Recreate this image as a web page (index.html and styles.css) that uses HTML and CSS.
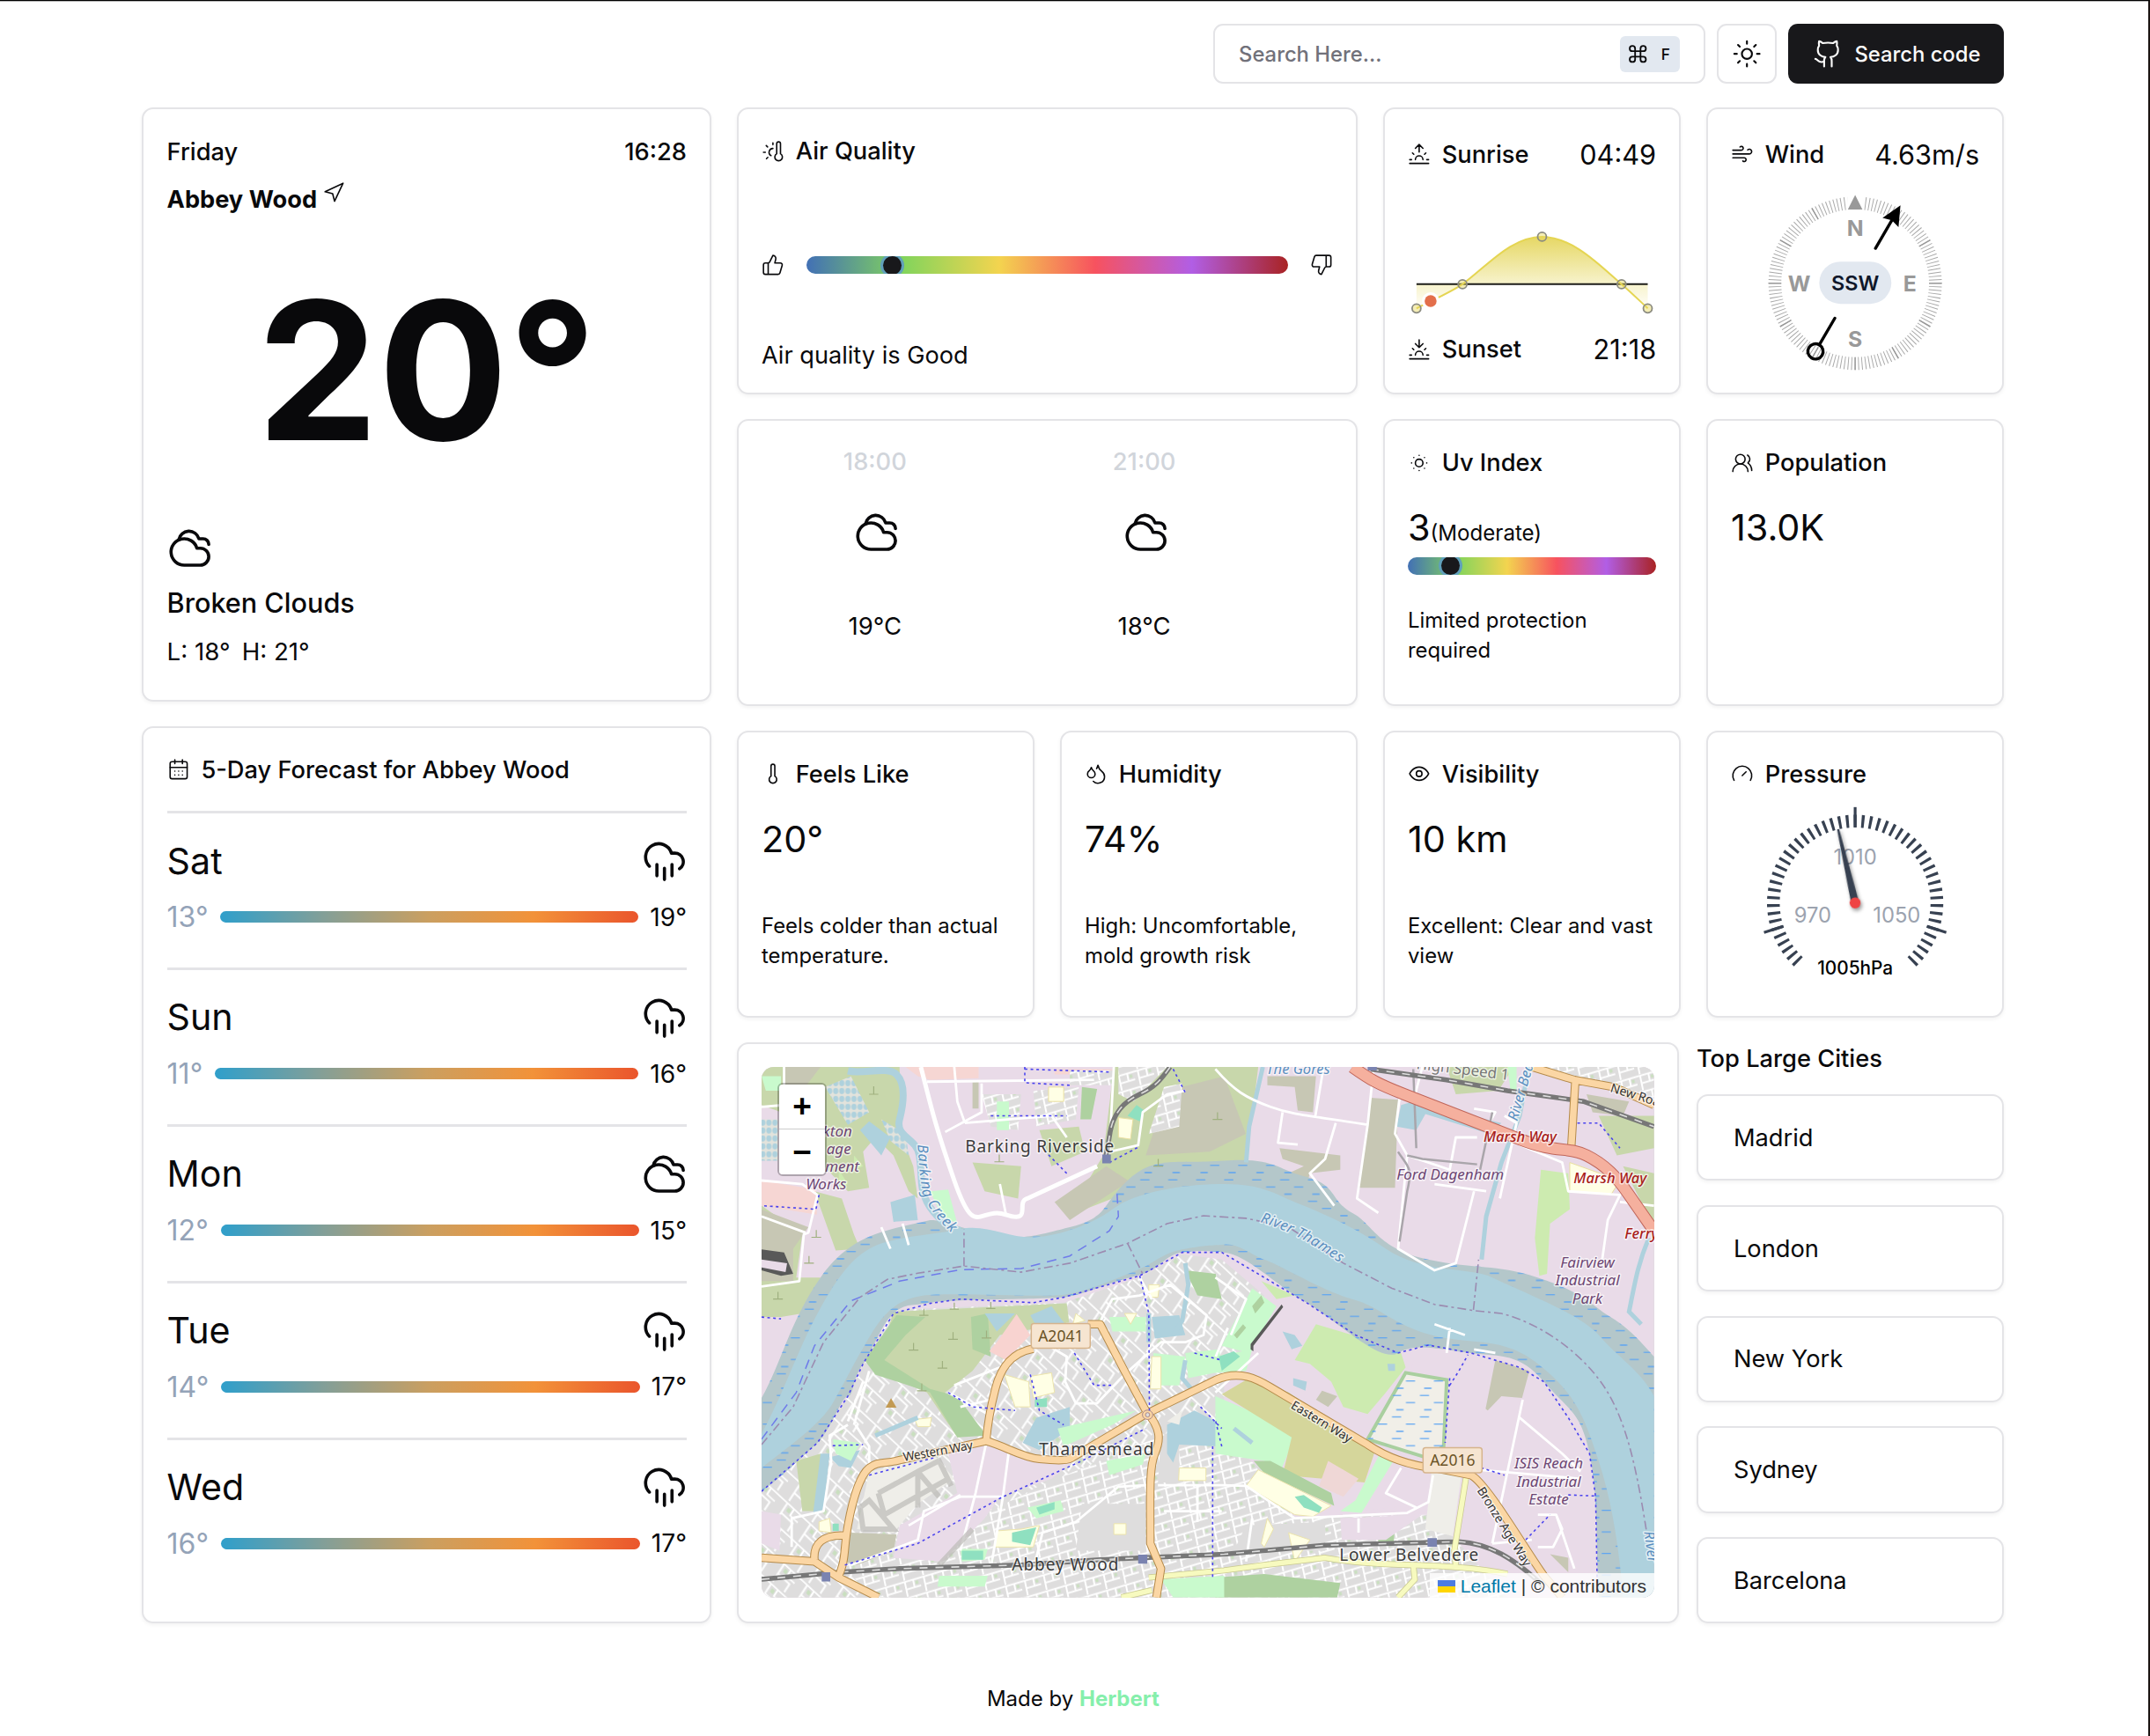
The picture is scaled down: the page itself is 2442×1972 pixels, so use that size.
FILE: index.html
```html
<!DOCTYPE html>
<html lang="en">
<head>
<meta charset="utf-8">
<title>Weather</title>
<link rel="stylesheet" href="styles.css">
</head>
<body>
<svg class="defs" aria-hidden="true">
  <symbol id="cloudy" viewBox="0 0 24 24"><path d="M17.5 21H9a7 7 0 1 1 6.71-9h1.79a4.5 4.5 0 1 1 0 9Z"/><path d="M22 10a3 3 0 0 0-3-3h-2.207a5.502 5.502 0 0 0-10.702.5"/></symbol>
  <symbol id="rain" viewBox="0 0 24 24"><path d="M4 14.899A7 7 0 1 1 15.71 8h1.79a4.5 4.5 0 0 1 2.5 8.242M16 14v6M8 14v6M12 16v6"/></symbol>
</svg>
<div class="page">
  <header class="header">
    <div class="search"><span>Search Here...</span>
      <kbd class="kbd"><svg class="cmd" viewBox="0 0 24 24"><path d="M15 6v12a3 3 0 1 0 3-3H6a3 3 0 1 0 3 3V6a3 3 0 1 0-3 3h12a3 3 0 1 0-3-3"/></svg><span>F</span></kbd>
    </div>
    <button class="theme"><svg class="i-head" viewBox="0 0 24 24"><circle cx="12" cy="12" r="4"/><path d="M12 2v2M12 20v2M4.93 4.93l1.41 1.41M17.66 17.66l1.41 1.41M2 12h2M20 12h2M6.34 17.66l-1.41 1.41M19.07 4.93l-1.41 1.41"/></svg></button>
    <button class="code"><svg class="i-head" viewBox="0 0 24 24"><path d="M15 22v-4a4.8 4.8 0 0 0-1-3.5c3 0 6-2 6-5.5.08-1.25-.27-2.48-1-3.5.28-1.15.28-2.35 0-3.5 0 0-1 0-3 1.5-2.64-.5-5.36-.5-8 0C6 2 5 2 5 2c-.3 1.15-.3 2.35 0 3.5A5.403 5.403 0 0 0 4 9c0 3.5 3 5.5 6 5.5-.39.49-.68 1.05-.85 1.65-.17.6-.22 1.23-.15 1.85v4"/><path d="M9 18c-4.51 2-5-2-7-2"/></svg>Search code</button>
  </header>

  <main class="main">
    <div class="left">
      <section class="card current">
        <div class="row between medium"><span>Friday</span><span>16:28</span></div>
        <div class="place">Abbey Wood<svg class="icon" viewBox="0 0 24 24"><path d="M3 11 22 2 13 21 11 13 3 11Z"/></svg></div>
        <div class="temp">20°</div>
        <svg class="wicon"><use href="#cloudy"/></svg>
        <div class="cond">Broken Clouds</div>
        <div class="lohi"><span>L: 18°</span><span>H: 21°</span></div>
      </section>
      <section class="card forecast">
        <h2 class="title"><svg class="icon" viewBox="0 0 24 24"><rect x="3" y="4" width="18" height="18" rx="2"/><path d="M16 2v4M8 2v4M3 10h18M8 14h.01M12 14h.01M16 14h.01M8 18h.01M12 18h.01M16 18h.01"/></svg>5-Day Forecast for Abbey Wood</h2>
        <div class="days">
          <div class="day"><div class="dhead"><span>Sat</span><svg class="wicon"><use href="#rain"/></svg></div><div class="range"><span class="lo">13°</span><i></i><span class="hi">19°</span></div></div>
          <div class="day"><div class="dhead"><span>Sun</span><svg class="wicon"><use href="#rain"/></svg></div><div class="range"><span class="lo">11°</span><i></i><span class="hi">16°</span></div></div>
          <div class="day"><div class="dhead"><span>Mon</span><svg class="wicon"><use href="#cloudy"/></svg></div><div class="range"><span class="lo">12°</span><i></i><span class="hi">15°</span></div></div>
          <div class="day"><div class="dhead"><span>Tue</span><svg class="wicon"><use href="#rain"/></svg></div><div class="range"><span class="lo">14°</span><i></i><span class="hi">17°</span></div></div>
          <div class="day"><div class="dhead"><span>Wed</span><svg class="wicon"><use href="#rain"/></svg></div><div class="range"><span class="lo">16°</span><i></i><span class="hi">17°</span></div></div>
        </div>
      </section>
    </div>

    <div class="right">
      <section class="card wide">
        <h2 class="title first"><svg class="icon" viewBox="0 0 24 24"><path d="M12 9a4 4 0 0 0-2 7.5M12 3v2M6.6 18.4l-1.4 1.4M20 4v10.54a4 4 0 1 1-4 0V4a2 2 0 0 1 4 0ZM4 13H2M6.34 7.34 4.93 5.93"/></svg>Air Quality</h2>
        <div class="aqrow">
          <svg class="icon" viewBox="0 0 24 24"><path d="M7 10v12M15 5.88 14 10h5.83a2 2 0 0 1 1.92 2.56l-2.33 8A2 2 0 0 1 17.5 22H4a2 2 0 0 1-2-2v-8a2 2 0 0 1 2-2h2.76a2 2 0 0 0 1.79-1.11L12 2a3.13 3.13 0 0 1 3 3.88Z"/></svg>
          <div class="scale"><b style="left:17.85%"></b></div>
          <svg class="icon" viewBox="0 0 24 24"><path d="M17 14V2M9 18.12 10 14H4.17a2 2 0 0 1-1.92-2.56l2.33-8A2 2 0 0 1 6.5 2H20a2 2 0 0 1 2 2v8a2 2 0 0 1-2 2h-2.76a2 2 0 0 0-1.79 1.11L12 22a3.13 3.13 0 0 1-3-3.88Z"/></svg>
        </div>
        <p class="aqtext">Air quality is Good</p>
      </section>

      <section class="card">
        <div class="sunrow"><h2 class="title"><svg class="icon" viewBox="0 0 24 24"><path d="M12 2v8M4.93 10.93l1.41 1.41M2 18h2M20 18h2M19.07 10.93l-1.41 1.41M22 22H2M8 6l4-4 4 4M16 18a4 4 0 0 0-8 0"/></svg>Sunrise</h2><span class="lg">04:49</span></div>
        <svg class="sunchart" viewBox="0 0 283 172.5">
          <defs>
            <linearGradient id="up" x1="0" y1="68" x2="0" y2="122" gradientUnits="userSpaceOnUse"><stop offset="0" stop-color="#e6d764"/><stop offset="1" stop-color="#f7f3cc"/></linearGradient>
            <linearGradient id="down" x1="0" y1="122" x2="0" y2="150" gradientUnits="userSpaceOnUse"><stop offset="0" stop-color="#f7f3cc"/><stop offset="1" stop-color="#fffefa"/></linearGradient>
          </defs>
          <g transform="translate(0 .7)">
          <path fill="url(#up)" d="M62.3 122.3C92 100 118 68.2 152.9 68.2S219 101 243.5 122.3Z"/>
          <path fill="url(#down)" d="M9.9 122.3H62.3C46 133 27.4 140.7 9.9 149.8ZM243.5 122.3H273.3V149.8C264 141 254 131 243.5 122.3Z"/>
          <path class="axis" d="M9.9 122.2H273.3"/>
          <path class="curve" d="M9.9 149.8C27.4 140.7 46 133 62.3 122.3C92 100 118 68.2 152.9 68.2S219 101 243.5 122.3C254 131 264 141 273.3 149.8"/>
          <g class="pts"><circle cx="9.9" cy="149.8" r="5"/><circle cx="62.3" cy="122.3" r="5"/><circle cx="152.9" cy="68.2" r="5"/><circle cx="243.5" cy="122.3" r="5"/><circle cx="273.3" cy="149.8" r="5"/></g>
          <circle cx="26" cy="141.5" r="10" fill="#fff"/><circle cx="26" cy="141.5" r="6.8" fill="#e36f4b"/>
          </g>
        </svg>
        <div class="sunrow"><h2 class="title"><svg class="icon" viewBox="0 0 24 24"><path d="M12 10V2M4.93 10.93l1.41 1.41M2 18h2M20 18h2M19.07 10.93l-1.41 1.41M22 22H2M16 6l-4 4-4-4M16 18a4 4 0 0 0-8 0"/></svg>Sunset</h2><span class="lg">21:18</span></div>
      </section>

      <section class="card">
        <div class="sunrow"><h2 class="title"><svg class="icon" viewBox="0 0 24 24"><path d="M17.7 7.7a2.5 2.5 0 1 1 1.8 4.3H2M9.6 4.6A2 2 0 1 1 11 8H2M12.6 19.4A2 2 0 1 0 14 16H2"/></svg>Wind</h2><span class="lg">4.63m/s</span></div>
        <svg class="compass" viewBox="-141.3 -121.8 282.6 221">
          <circle class="ticks" r="91.3" pathLength="1440"/>
          <circle class="ticks twelfths" r="91.3" pathLength="1440"/>
          <path fill="#fff" d="M-9-101H9V-83H-9Z"/><path fill="#999" d="M0-100.5 8.3-84H-8.3Z"/>
          <g class="dirs"><text y="-54">N</text><text x="-63.7" y="8.8">W</text><text x="62.3" y="8.8">E</text><text y="72">S</text></g>
          <rect x="-40.8" y="-24.6" width="82" height="48" rx="24" fill="#e2e8f0"/>
          <text class="ssw" y="8">SSW</text>
          <g transform="rotate(30.2)"><path class="needle" d="M0-46V-84M0 46V81"/><path d="M0-102.5 10.5-80 0-83-10.5-80Z"/><circle class="needle" r="8.7" cy="89.7"/></g>
        </svg>
      </section>

      <section class="card wide hours">
        <div class="hour"><time>18:00</time><svg class="wicon"><use href="#cloudy"/></svg><span>19°C</span></div>
        <div class="hour"><time>21:00</time><svg class="wicon"><use href="#cloudy"/></svg><span>18°C</span></div>
      </section>

      <section class="card">
        <h2 class="title"><svg class="icon" viewBox="0 0 24 24"><circle cx="12" cy="12" r="4"/><path d="M12 4h.01M20 12h.01M12 20h.01M4 12h.01M17.657 6.343h.01M17.657 17.657h.01M6.343 17.657h.01M6.343 6.343h.01"/></svg>Uv Index</h2>
        <div class="value">3<small>(Moderate)</small></div>
        <div class="scale uv"><b style="left:17.3%"></b></div>
        <p class="desc uvdesc">Limited protection required</p>
      </section>
      <section class="card">
        <h2 class="title"><svg class="icon" viewBox="0 0 24 24"><path d="M18 21a8 8 0 0 0-16 0"/><circle cx="10" cy="8" r="5"/><path d="M22 20c0-3.37-2-6.5-4-8a5 5 0 0 0-.45-8.3"/></svg>Population</h2>
        <div class="value">13.0K</div>
      </section>

      <section class="card">
        <h2 class="title"><svg class="icon" viewBox="0 0 24 24"><path d="M14 4v10.54a4 4 0 1 1-4 0V4a2 2 0 0 1 4 0Z"/></svg>Feels Like</h2>
        <div class="value">20°</div><p class="desc">Feels colder than actual temperature.</p>
      </section>
      <section class="card">
        <h2 class="title"><svg class="icon" viewBox="0 0 24 24"><path d="M7 16.3c2.2 0 4-1.83 4-4.05 0-1.16-.57-2.26-1.71-3.19S7.29 6.75 7 5.3c-.29 1.45-1.14 2.84-2.29 3.76S3 11.1 3 12.25c0 2.22 1.8 4.05 4 4.05z"/><path d="M12.56 6.6A10.97 10.97 0 0 0 14 3.02c.5 2.5 2 4.9 4 6.5s3 3.5 3 5.5a6.98 6.98 0 0 1-11.91 4.97"/></svg>Humidity</h2>
        <div class="value">74%</div><p class="desc">High: Uncomfortable, mold growth risk</p>
      </section>
      <section class="card">
        <h2 class="title"><svg class="icon" viewBox="0 0 24 24"><path d="M2 12s3-7 10-7 10 7 10 7-3 7-10 7-10-7-10-7Z"/><circle cx="12" cy="12" r="3"/></svg>Visibility</h2>
        <div class="value">10 km</div><p class="desc">Excellent: Clear and vast view</p>
      </section>
      <section class="card">
        <h2 class="title"><svg class="icon" viewBox="0 0 24 24"><path d="M12 14l4-4M3.34 19a10 10 0 1 1 17.32 0"/></svg>Pressure</h2>
        <svg class="gauge" viewBox="-141.3 -125.7 282.6 225">
          <path class="gticks" pathLength="272" d="M-64.6 66.9A93 93 0 1 1 64.6 66.9"/>
          <g class="gmajor"><path d="M0-86V-109"/><path d="M0-86V-109" transform="rotate(108)"/><path d="M0-86V-109" transform="rotate(-108)"/></g>
          <g class="glabels"><text y="-43.3">1010</text><text x="-48.3" y="22.6">970</text><text x="47.3" y="22.6">1050</text></g>
          <g class="gneedle" transform="rotate(-13)"><path d="M-1.2-86H1.2L4.5 0H-4.5Z"/><circle r="6.2"/></g>
          <text class="hpa" y="81.3">1005hPa</text>
        </svg>
      </section>

      <div class="bottom">
        <section class="card mapcard">
          <div class="map">
            <svg class="geo" viewBox="46 54 2936 1476" preserveAspectRatio="none">
              <defs>
                <pattern id="st1" width="64" height="46" patternUnits="userSpaceOnUse" patternTransform="rotate(-14)"><rect width="64" height="46" fill="#dedddd"/><path class="street" d="M0 4H64M14 4V46M14 26H64M42 4V26"/><rect x="48" y="10" width="9" height="9" fill="#c9dfbf"/></pattern>
                <pattern id="st2" width="96" height="70" patternUnits="userSpaceOnUse" patternTransform="rotate(38)"><rect width="96" height="70" fill="#dedddd"/><path class="street" d="M0 8H96M20 8V70M20 42H68V70M48 8V30H80"/><rect x="30" y="16" width="12" height="12" fill="#c9dfbf"/></pattern>
                <pattern id="mud" width="92" height="60" patternUnits="userSpaceOnUse"><path class="dash" d="M4 8H34M50 28H80M18 48H42"/></pattern>
                <pattern id="beds" width="20" height="22" patternUnits="userSpaceOnUse"><rect width="20" height="22" fill="#e3e3dc"/><circle cx="10" cy="11" r="8.5" fill="#aed1dd"/></pattern>
              </defs>
              <rect x="46" y="54" width="2936" height="1476" fill="#e9dbe8"/>
              <g class="scrub"><path d="M120 54H500L505 240 545 330 560 420 530 400 480 300 420 250 380 290 400 390 330 400 240 320 240 220 46 160V54ZM220 400 290 565 370 560 350 520 310 420ZM46 440 180 520 160 640 240 640 180 740 110 750H46ZM1205 54H1680L1640 330 1400 330 1200 420 1050 470 1170 300ZM2300 54H2520L2470 120 2330 130ZM2800 190H2982V280L2860 300ZM2880 330 2982 350V500Z"/><path d="M740 320 900 330 890 420 780 400ZM960 230 1090 220 1110 290 1000 330Z"/></g>
              <path class="wood" d="M1100 110 1150 115 1130 200 1095 200Z"/>
              <g class="brown"><path d="M1380 120 1568 80 1639 240 1520 290 1310 300ZM1010 430 1180 330 1255 372 1060 480ZM46 450 200 500 150 560 150 650 46 650ZM1710 80H1870L1860 180 1810 175 1800 110 1710 105ZM1750 280 1950 300V340L1850 350 1840 380 1780 350 1830 330 1760 310ZM2050 140 2140 145 2130 390 2010 390ZM740 95H760V170H740ZM2760 130 2900 150 2880 190 2780 180ZM120 54H240L180 120 120 130Z"/></g>
              <path fill="#f6d6d3" d="M46 370 225 395 228 465 46 440ZM520 54H760V85L600 90 560 80ZM1010 60H1200V75H1010Z"/>
              <path fill="url(#beds)" d="M255 110 340 80 400 180 330 215ZM46 200H100V315H46ZM440 200 520 240 530 300 470 260Z"/>
              <path class="water" d="M370 230 400 205 470 250 440 300ZM470 430 550 410 560 480 480 485ZM2135 220 2150 160 2190 150 2480 210 2440 240 2230 185 2200 230Z"/>
              <path fill="url(#st1)" d="M770 130H900L890 230 800 220ZM940 120 1090 110 1080 200 950 220ZM1220 54H1380L1270 150 1220 130ZM1370 110 1430 100 1420 220 1320 240ZM1060 64H1205V105H1060ZM2600 54H2982V140L2850 105Z"/>
              <g class="park"><path d="M820 150H860V230H820ZM600 400 660 395 690 490 640 470ZM46 80H110V120H60ZM2500 54H2530V120H2510Z"/></g>
              <path fill="#cdebb0" d="M2610 340 2700 350 2705 450 2640 490 2630 630 2605 635 2590 530ZM300 340 330 380 300 395ZM350 300 380 330 350 340Z"/>
              <path fill="#ffffe5" stroke="#e9dfa0" d="M990 110H1040V150H990ZM1220 195 1268 200 1260 255 1220 250ZM2705 320 2870 370 2840 410 2705 400Z"/>
              <path class="pitch" d="M1250 190 1280 160 1305 175 1290 205Z"/>

              <path fill="url(#st2)" d="M46 1235 230 1100 330 970 390 870 480 730 1040 710 1290 640 1430 575 1560 590 1700 690 1650 850 1568 920V1530H46Z"/>
              <path fill="url(#st1)" d="M1330 1090H1568L1700 1180 1800 1310 2250 1300 2330 1370 2500 1530H400L320 1440 560 1390 800 1290 960 1220Z"/>
              <path fill="#dedddd" d="M1100 1270H1310V1400H1080ZM1360 1085 1420 1050V1210H1350ZM1640 1330 1900 1320V1400H1600Z"/>
              <g class="scrub"><path d="M480 735 1050 712 1058 765 830 800 740 900 650 960 785 1075 690 1085 590 960 420 900ZM160 1150 240 1130 240 1290 180 1290ZM2850 1400 2900 1480 2800 1480Z"/></g>
              <g class="wood"><path d="M385 870 490 745 585 750 520 800 450 870 600 950 690 970 785 1080 690 1085 600 960 420 910ZM735 750 790 740 800 860 740 840ZM1440 620 1540 630 1560 700 1480 690ZM1539 1530V1475L1700 1465 1950 1490 1940 1530ZM2075 1335 2130 1325 2125 1385 2075 1375Z"/></g>
              <path class="water" d="M780 740 880 740 820 790ZM930 745 1000 720 1045 770 960 790ZM905 1100 950 1030 1060 1000 1060 1060 960 1120ZM1380 1050 1470 1010 1540 1040 1550 1110 1420 1105 1400 1155 1380 1130ZM1330 750 1420 745 1440 800 1340 810ZM240 1130 270 1130 250 1290 215 1300ZM270 1140 370 1120 340 1170 300 1165Z"/>
              <path fill="#f8d3d0" d="M820 820 885 742 930 800 850 870 795 845Z"/>
              <path fill="#efeee9" d="M400 1180 620 1140 680 1200 560 1270 480 1350 360 1340ZM2250 1180 2350 1180 2320 1360 2230 1340ZM1380 1040 1430 1010 1420 1050Z"/>
              <path fill="#e9dbe8" d="M660 1130 785 1100 960 1150 1090 1140 1000 1200 830 1250 780 1310 640 1430 480 1420 500 1330 690 1240ZM1720 690 1850 720 2170 870 2040 1090 1660 880ZM46 1290 110 1300 105 1400 46 1380ZM2340 850 2540 890 2700 1030 2780 1160 2795 1530H2650L2400 1200 2290 1110ZM2200 850 2340 850 2310 930 2180 900ZM2060 1230 2240 1180 2220 1270 2020 1290ZM1950 1310 2220 1300 2100 1370 1955 1370Z"/>
              <path class="brown" d="M340 1350 490 1355 480 1400 360 1440 320 1430ZM2460 870 2572 900 2548 975 2480 970 2435 1010 2428 1005ZM1890 955 1940 970 1910 1000 1870 980ZM2640 1410 2700 1420 2700 1460Z"/>
              <path fill="#cdebb0" d="M1870 770 1990 800 2050 790 2150 850 2165 890 2100 960 2040 1020 1960 1000 1920 930 1850 880 1800 870ZM1690 650 1800 690 1740 700Z"/>
              <g class="park"><path d="M1660 670 1740 720 1650 850 1560 830ZM1539 860 1660 840 1640 900 1539 905ZM1539 970 1650 1010 1800 1085 1750 1185 1700 1150 1539 1130ZM2080 1130 2125 1150 2020 1295 1950 1290 2000 1260ZM1190 750 1310 750 1310 790 1200 790ZM1020 1060 1280 1010 1200 1050 1040 1110ZM1180 1150 1310 1130 1300 1160 1190 1190ZM920 1280 1030 1260 1040 1290 950 1310ZM700 1395 790 1395 780 1425 705 1430ZM630 1470 790 1470 780 1500 625 1500ZM280 1090 370 1100 340 1150 290 1130ZM1335 850 1440 860 1420 940 1340 940ZM1440 850 1550 840 1568 900 1450 920ZM1360 1480 1568 1470V1530H1400Z"/></g>
              <path fill="#d5d69b" d="M1560 965 1640 925 1780 960 2065 1120 2030 1210 1760 1190 1790 1085Z"/>
              <path fill="#efd7d6" d="M1910 1150 2010 1200 1960 1250 1880 1220Z"/>
              <path class="wood" d="M1665 1150 1720 1150 1920 1240 1930 1275 1700 1185ZM1600 800 1630 770 1640 780 1610 810ZM1660 720 1690 690 1700 710 1670 740Z"/>
              <path fill="#ffffe5" stroke="#ece4ac" d="M1680 1175 1920 1275 1860 1305 1800 1300 1640 1220ZM845 910 925 930 930 1000 880 1000ZM930 915 1000 905 1010 960 940 975ZM1080 740 1110 760 1070 770ZM1320 660 1355 660 1350 695 1320 695ZM1330 860H1360V950H1325ZM820 1345 900 1340 960 1330 940 1390 810 1390ZM550 1035 605 1030 600 1055 560 1055ZM235 1320 270 1310 275 1350 235 1345ZM1420 1170H1508V1205H1418ZM1240 740 1280 740 1260 770ZM1205 1325H1245V1355H1205ZM1710 1310 1730 1340 1700 1390 1690 1380ZM1780 1350 1850 1370 1800 1430Z"/>
              <path class="pitch" d="M945 980 985 975 985 1000 945 1000ZM870 1350 950 1335 930 1385 870 1375ZM705 1400H775V1425H705ZM1550 860 1600 845 1620 860 1560 900ZM1800 1250 1830 1245 1890 1280 1880 1295 1830 1280ZM950 1280 1010 1265 1010 1285 960 1300ZM280 1325H300V1345H280Z"/>
              <path class="water" d="M1760 790 1800 800 1825 830 1790 840ZM1795 920 1840 930 1835 955 1795 940ZM2105 880 2130 880 2130 900 2108 900Z"/>
              <path fill="#f1efe8" stroke="#a9cf9f" stroke-width="4" d="M2165 905 2300 925 2290 1110 2230 1140 2040 1090Z"/>
              <path fill="url(#mud)" d="M2165 905 2300 925 2290 1110 2230 1140 2040 1090Z"/>

              <path fill="#b4c7ca" d="M46 975C110 880 140 760 240 640S450 510 600 480C660 480 700 505 800 520S930 528 1060 500 1160 440 1250 370 1400 325 1568 315 1740 340 1839 360 1920 430 1989 460 2070 560 2239 590 2450 600 2599 640 2780 720 2839 750 2940 820 2982 860V1530H2800C2790 1400 2800 1250 2770 1130S2700 1010 2620 930 2480 860 2379 850 2200 820 2140 850 1940 760 1839 710 1640 575 1568 570 1490 565 1430 570 1360 620 1280 635 1100 690 1040 695 660 700 600 710 520 710 480 740 420 830 380 880 350 970 330 970 270 1070 230 1100 120 1190 46 1235Z"/>
              <path fill="url(#mud)" d="M46 975C110 880 140 760 240 640S450 510 600 480C660 480 700 505 800 520S930 528 1060 500 1160 440 1250 370 1400 325 1568 315 1740 340 1839 360 1920 430 1989 460 2070 560 2239 590 2450 600 2599 640 2780 720 2839 750 2940 820 2982 860V1530H2800C2790 1400 2800 1250 2770 1130S2700 1010 2620 930 2480 860 2379 850 2200 820 2140 850 1940 760 1839 710 1640 575 1568 570 1490 565 1430 570 1360 620 1280 635 1100 690 1040 695 660 700 600 710 520 710 480 740 420 830 380 880 350 970 330 970 270 1070 230 1100 120 1190 46 1235Z"/>
              <path class="water" d="M46 1075C120 960 160 850 230 740S360 560 460 540 620 520 700 505 860 528 930 528 1120 500 1200 450 1440 380 1568 380 1740 410 1800 430 1980 490 2100 560 2380 610 2450 640 2740 740 2800 800 2940 900 2982 970V1530H2880C2870 1420 2850 1280 2800 1150S2720 960 2600 880 2380 830 2250 800 2080 720 1989 700 1740 600 1700 590 1620 545 1568 548 1500 550 1430 562 1340 600 1280 620 1120 680 1040 688 660 680 580 690 460 730 420 780 320 930 280 990 120 1120 46 1170Z"/>
              <path class="ws" stroke-width="8" d="M330 65C380 75 460 50 490 75S515 150 500 200 555 250 565 300 565 390 590 430 660 500 700 510"/>
              <path class="ws" stroke-width="5" d="M1695 54 1650 220 1640 320M2570 54 2540 190 2480 320 2430 470 2415 590M2965 530C2930 600 2920 650 2900 735L2940 770M1440 600 1450 660 1430 760 1400 800M1320 740V820M420 1080 560 1030M1600 1060 1660 1100M1440 870 1430 920 1460 950"/>

              <g class="rd minor"><path d="M120 54V160L46 165M680 54 690 150 715 210M590 95 1140 90M770 100V180L650 235M715 210 1000 190 1050 250M830 380 850 465M1205 54 1190 290 1285 272 1300 180 1380 130 1440 120M1539 60C1600 120 1640 140 1720 165S1860 190 2040 215M1895 54 1868 190M1760 180 1745 265 1810 270M1935 210 1900 310 1850 350 1930 440M2060 54 2040 215 2005 420 2075 460M2220 54 2190 150M2145 140 2130 240 2170 300 2140 560 2260 620 2330 600 2390 400M2170 300 2310 340 2330 250 2400 250M2390 170 2460 180 2440 210M2490 190 2530 210 2480 400 2475 420M2260 380 2430 400M2539 270 2680 320 2700 400 2870 410 2830 480 2810 600M2870 430 2982 440M46 370 180 380 230 410 200 515 185 520 170 650 46 665M46 470 190 515"/>
              <path d="M1155 770 1200 700 1290 690 1390 660 1510 745 1500 800 1440 820 1360 820 1240 910 1150 990 1080 990 1045 930 1050 860 1010 840M1290 640 1330 700M660 960 790 1020M680 940 830 890M700 1000 800 980M330 1050 270 1080 275 1150 250 1290 145 1310 145 1390M355 1050 400 1110 400 1160M350 1050 400 900M380 930 330 1040M785 1100 750 1240 700 1400M860 1120 840 1250 700 1250 580 1290 560 1370 340 1440M530 1330 700 1245M840 1250 800 1450M1350 1218H1568L1640 1220 1800 1310 2170 1295 2240 1265 2255 1190M1310 1218 1220 1222 1080 1320 970 1350 950 1420M2150 1170 2100 1240 2200 1280M1660 1310 1640 1430M1480 1220V1320M1370 1290H1560M2010 1310V1350M1539 960 1680 850M2550 980 2450 1380M2540 1030 2680 1130 2740 1180M2340 1170 2740 1200M2600 1300 2660 1300 2680 1340 2650 1390 2600 1390M2660 1300 2720 1450M2450 1380 2580 1370M1580 780 1540 860M1539 640 1640 700 1590 800M2260 770 2360 800M2310 780 2300 850M2390 840 2460 850M440 500 470 560M510 490 530 550"/></g>
              <path class="rd trunk" d="M570 54C600 150 610 200 680 370S760 440 850 465 880 430 920 420L1150 330"/>
              <path fill="none" stroke="#bdbcb8" stroke-width="6" opacity=".7" d="M380 1340 370 1280 400 1260 440 1300 480 1340ZM430 1240 560 1180V1280M430 1240 450 1300 660 1200M560 1180 630 1150 670 1220M560 1180 630 1250M630 1440 740 1340"/>
              <path class="siding" d="M2170 300 2220 310 2400 325M2190 60 2200 280M2140 290C2170 330 2190 330 2170 400L2145 540M2410 340 2450 180"/>
              <path class="rail" d="M1390 54C1360 90 1340 110 1290 130S1200 180 1190 250L1175 320M2050 60 2300 90 2500 120 2750 150 2982 220M46 1480 300 1460 500 1450 900 1440 1160 1425 1568 1410 1900 1385 2340 1375C2440 1380 2520 1420 2620 1500"/>
              <path class="raild" d="M1390 54C1360 90 1340 110 1290 130S1200 180 1190 250L1175 320M2050 60 2300 90 2500 120 2750 150 2982 220M46 1480 300 1460 500 1450 900 1440 1160 1425 1568 1410 1900 1385 2340 1375C2440 1380 2520 1420 2620 1500"/>
              <path fill="#595959" d="M46 562 120 570 150 630 110 635 46 620ZM1655 840V825L1757 715 1762 722 1664 830V845Z"/><path fill="#e9dbe8" d="M46 590 130 600 125 625 46 612Z"/>

              <path class="yc" d="M1320 1475 1568 1455 1700 1440 1900 1420C2100 1450 2300 1430 2500 1465M2365 1190 2325 1400 2330 1440M2190 1440 2195 1480 2140 1530M1230 1530 1330 1510"/><path class="yf" d="M1320 1475 1568 1455 1700 1440 1900 1420C2100 1450 2300 1430 2500 1465M2365 1190 2325 1400 2330 1440M2190 1440 2195 1480 2140 1530M1230 1530 1330 1510"/>
              <path class="oc" d="M940 838C860 850 830 900 815 950S790 1040 785 1095M46 1420 220 1430 300 1475 430 1530M220 1425C215 1380 250 1355 318 1358M300 1470C325 1420 315 1400 330 1330S370 1190 400 1170 450 1160 500 1148L785 1095C850 1110 900 1140 960 1145S1060 1150 1070 1140L1310 1020 1540 925C1620 895 1680 925 1720 945L2040 1105C2120 1150 2200 1165 2260 1170L2380 1190C2430 1210 2560 1400 2620 1470L2680 1530M1120 770H1160L1240 900 1310 1010C1360 1060 1360 1090 1340 1130S1325 1250 1325 1380L1360 1450 1345 1530M2580 54 2720 90 2850 110 2982 160M2723 95 2710 275"/>
              <path class="of" d="M940 838C860 850 830 900 815 950S790 1040 785 1095M46 1420 220 1430 300 1475 430 1530M220 1425C215 1380 250 1355 318 1358M300 1470C325 1420 315 1400 330 1330S370 1190 400 1170 450 1160 500 1148L785 1095C850 1110 900 1140 960 1145S1060 1150 1070 1140L1310 1020 1540 925C1620 895 1680 925 1720 945L2040 1105C2120 1150 2200 1165 2260 1170L2380 1190C2430 1210 2560 1400 2620 1470L2680 1530M1120 770H1160L1240 900 1310 1010C1360 1060 1360 1090 1340 1130S1325 1250 1325 1380L1360 1450 1345 1530M2580 54 2720 90 2850 110 2982 160M2723 95 2710 275"/>
              <ellipse cx="1316" cy="1022" rx="17" ry="13" fill="#fbd6a4" stroke="#a88"/><ellipse cx="1316" cy="1022" rx="7" ry="6" fill="#dedddd" stroke="#a88"/>
              <path class="rc" d="M1990 54C2050 90 2070 100 2160 130S2420 215 2540 255 2700 275 2760 300 2860 360 2900 410L2982 510"/>
              <path class="rf" d="M1990 54C2050 90 2070 100 2160 130S2420 215 2540 255 2700 275 2760 300 2860 360 2900 410L2982 510"/>

              <path class="foot" d="M46 1235 230 1100 330 970 380 880 480 740 600 712 700 700 940 710 1040 695 1290 635 1430 570 1560 570 1700 640 1839 710 2000 800 2140 850 2240 828 2380 850 2540 890 2620 930 2700 1030 2770 1130 2790 1250 2795 1480M912 54V98L1060 105M912 60 1190 68M1290 635 1320 740 1322 1010M235 410 225 450 46 440M400 1190 620 1140M320 1440 560 1380 840 1250 1100 1150 1310 1060M1530 1110V1480M660 960 740 1000 880 1010M930 910 960 1010 1040 1050M1075 850 1140 940 1200 940M1470 850 1560 870M1490 1000 1560 1060M280 1108 380 1105M800 190 1050 190M1050 350 980 290M1540 1040 1560 1110M2310 920 2295 1100M2310 940 2340 900 2370 855M2340 1150 2490 1190M2560 1370 2640 1300M2700 1245 2790 1248M2730 210 2800 210 2870 280M1400 60 1440 125M46 750 110 755M1190 320 1290 275"/>
              <path class="ferry" d="M46 1090 160 960 220 830 340 705 500 650 700 618 900 615 1060 580 1190 510 1220 470 1215 400"/>
              <path class="bound" d="M46 1105 150 1000 250 820 370 695 460 645 560 628 712 608 900 625 1060 600 1250 545 1380 490 1500 468 1639 475 1780 500 1960 600 2120 670 2260 715 2390 732 2480 740C2620 770 2760 860 2830 960S2930 1200 2960 1360M712 608V505M1250 545 1300 630M2388 730 2405 590"/>
              <path class="trees" d="M400 130h30m-15 0v-22M565 745h30m-15 0v-18M665 728h30m-15 0v-18M785 726h30m-15 0v-18M530 842h32m-16 0v-20M660 812h32m-16 0v-20M770 808h32m-16 0v-20M625 892h32m-16 0v-20M557 955h32m-16 0v-20M210 528h32m-16 0v-20M186 600h32m-16 0v-20M84 700h32m-16 0v-20M1335 330h32m-16 0v-20M1530 200h32m-16 0v-20M812 318h32m-16 0v-20"/>
              <path fill="#c29a53" d="M472 976 490 1002H454Z"/>
              <path fill="#7a83b0" d="M1167 298H1195V322H1167ZM1285 1411H1315V1436H1285ZM244 1460H272V1486H244ZM2237 1365H2268V1389H2237ZM2040 54H2070V64H2040Z"/>
            </svg>
            <svg class="labels" viewBox="0 0 1011 602.5">
              <defs>
                <path id="p1" d="M565 176Q612 190 660 226"/><path id="p2" d="M176 88Q178 125 182 145 192 168 216 190"/>
              </defs>
              <g class="town"><text x="230" y="97" textLength="169">Barking Riverside</text><text x="314" y="441" textLength="130">Thamesmead</text><text x="283" y="572" textLength="121">Abbey Wood</text><text x="655" y="561.4" textLength="158">Lower Belvedere</text></g>
              <g class="ind"><text x="780.8" y="127.6">Ford Dagenham</text><text x="936.7" y="228">Fairview</text><text x="936.7" y="248.4">Industrial</text><text x="936.7" y="268.8">Park</text><text x="892.7" y="456">ISIS Reach</text><text x="892.7" y="476.5">Industrial</text><text x="892.7" y="496.5">Estate</text><text x="72" y="139">Works</text><text class="end" x="101.5" y="79">kton</text><text class="end" x="100.4" y="99">age</text><text class="end" x="109.7" y="119.4">ment</text></g>
              <g class="a13"><text x="818.6" y="84.5" textLength="83">Marsh Way</text><text x="921" y="131.5" textLength="83">Marsh Way</text><text x="979" y="195">Ferry</text></g>
              <g class="wat"><text><textPath href="#p1" textLength="102">River Thames</textPath></text><text><textPath href="#p2" textLength="112">Barking Creek</textPath></text><text x="572" y="8">The Gores</text><text transform="translate(857 62)rotate(-74)">River Bea</text><text transform="translate(1001 528)rotate(82)">River</text></g>
              <g class="road"><text transform="translate(599 387)rotate(31)" textLength="78">Eastern Way</text><text transform="translate(160.5 448)rotate(-10)" textLength="80">Western Way</text><text transform="translate(811 481)rotate(58)" textLength="103">Bronze Age Way</text><text transform="translate(962 28)rotate(17)">New Roa</text></g>
              <text class="hs" transform="translate(742 2)rotate(7)">High Speed 1</text>
              <g class="badge"><rect x="305" y="291.5" width="67" height="28" rx="3"/><text x="338.5" y="312">A2041</text><rect x="750" y="432.5" width="67" height="28.5" rx="3"/><text x="783.5" y="453">A2016</text></g>
            </svg>
            <div class="zoom"><button>+</button><button>−</button></div>
            <div class="attr"><svg width="20" height="14" viewBox="0 0 20 14"><path fill="#4c7be1" d="M0 0H20V7H0Z"/><path fill="#ffd500" d="M0 7H20V14H0Z"/></svg><a>Leaflet</a><span>| © contributors</span></div>
          </div>
        </section>
        <aside class="cities">
          <h2>Top Large Cities</h2>
          <div class="city">Madrid</div><div class="city">London</div><div class="city">New York</div><div class="city">Sydney</div><div class="city">Barcelona</div>
        </aside>
      </div>
    </div>
  </main>
  <footer class="footer">Made by <b>Herbert</b></footer>
</div>
</body>
</html>
```
FILE: styles.css
```css
*{box-sizing:border-box}
body{margin:0;background:#fff;color:#09090b;font-family:Inter,sans-serif;font-size:27.25px}
h2,p{margin:0;font:inherit}
button{font:inherit;margin:0;padding:0}
svg{display:block;flex:none}
.defs{display:none}
.page{width:2442px;height:1972px;overflow:hidden;padding:25px 163.6px 0 161.3px;border-top:1px solid #000;border-right:2px solid #1a1412;box-shadow:inset 0 1px #b5b5b5}

.header{display:flex;justify-content:flex-end;gap:13.2px;height:69px;padding-top:1px}
.search{width:559px;height:68px;border:2px solid #e4e4e7;border-radius:11px;display:flex;align-items:center;justify-content:space-between;padding:0 27px 0 27px;color:#71717a;font-size:23.8px;font-weight:500}
.kbd{width:68px;height:41px;border-radius:6px;background:#e2e8f0;color:#09090b;display:flex;align-items:center;justify-content:center;gap:14px;padding-right:3px;font-family:inherit;font-size:17.3px;font-weight:500}
.cmd{width:24.5px;height:24.5px;fill:none;stroke:currentColor;stroke-width:1.8}
.theme{width:68px;height:68px;border:2px solid #e4e4e7;border-radius:11px;background:#fff;color:#09090b;display:grid;place-items:center}
.code{width:245px;height:68px;border:0;border-radius:11px;background:#18181b;color:#fafafa;font-size:23.8px;font-weight:500;display:flex;align-items:center;padding-left:28px;gap:12.6px}
.i-head{width:34.4px;height:34.4px;fill:none;stroke:currentColor;stroke-width:1.5;stroke-linecap:round;stroke-linejoin:round}

.main{display:flex;gap:28.4px;margin-top:27.4px}
.left{width:647px;display:flex;flex-direction:column;gap:28px}
.right{flex:1;display:grid;grid-template-columns:repeat(4,1fr);grid-template-rows:repeat(3,326px) 660.5px;gap:27.8px 28.2px}
.card{border:2px solid #e4e4e7;border-radius:13px;padding:26.3px;background:#fff;box-shadow:0 2px 4px rgba(0,0,0,.05);min-width:0}
.wide{grid-column:span 2}
.icon{width:25.8px;height:25.8px;fill:none;stroke:currentColor;stroke-width:1.5;stroke-linecap:round;stroke-linejoin:round}
.wicon{width:51.4px;height:51.4px;fill:none;stroke:currentColor;stroke-width:1.7;stroke-linecap:round;stroke-linejoin:round}
.title{display:flex;align-items:center;gap:13px;height:42px;font-weight:500;white-space:nowrap}
.title.first{line-height:44px;margin-bottom:0}

.current{height:674.5px}
.row{display:flex;line-height:42px;padding-top:1px}
.between{justify-content:space-between}
.medium{font-weight:500}
.place{display:flex;gap:6px;margin-top:12px;line-height:42px;font-weight:700;font-size:27.2px}
.place .icon{margin-top:.5px}
.temp{margin-top:63px;font-size:219px;line-height:220px;font-weight:700;text-align:center}
.current .wicon{margin-top:66.5px}
.cond{margin-top:15px;font-size:30.6px;line-height:42px;font-weight:500}
.lohi{display:flex;gap:13px;margin-top:13.5px;line-height:42px;font-size:27.7px}

.forecast{height:1019px}
.days{margin-top:26px}
.day{border-top:3px solid #e4e4e7;padding-top:27.7px;height:177.9px}
.dhead{display:flex;justify-content:space-between;align-items:center;height:51.4px;font-size:41.2px}
.dhead .wicon{margin-right:-.5px}
.range{display:flex;align-items:center;height:48px;margin-top:14.5px;gap:13px}
.range i{flex:1;height:13px;border-radius:7px;background:linear-gradient(90deg,#2f9fcb,#849f97 25%,#cb9f60 50%,#f29239 75%,#ea552c)}
.lo{font-size:32px;margin-right:1px;color:#94a3b8}
.hi{font-size:28.2px}

.scale{position:relative;flex:1;height:20px;border-radius:10px;overflow:hidden;background:linear-gradient(90deg,#4270b5,#82d45c 20%,#f3d44f 40%,#f7525f 60%,#b15ee5 80%,#a92323)}
.scale b{position:absolute;top:-.5px;width:21px;height:21px;margin-left:-10.5px;border-radius:50%;background:#18181b;box-shadow:0 0 0 3px #60a0ba}
.aqrow{display:flex;align-items:center;gap:25.4px;height:26px;margin-top:95.5px}
.aqtext{margin-top:69px;line-height:42px;font-size:27.15px}
.sunrow{display:flex;align-items:center;justify-content:space-between;height:49px}
.lg{font-size:30.7px}
.sunchart{width:100%;height:172.5px}
.axis{stroke:#1c1c18;stroke-width:2}
.curve{fill:none;stroke:#e5d552;stroke-width:2}
.pts{fill:rgba(230,215,90,.45);stroke:#8b8b80;stroke-width:1.8}
.compass{width:100%;height:221px}
.ticks{fill:none;stroke:#a8a8a8;stroke-width:14.6;stroke-dasharray:2.4 7.6;stroke-dashoffset:1.2}
.twelfths{stroke:#999;stroke-dasharray:3.6 116.4;stroke-dashoffset:1.8}
.dirs{fill:#999;font-size:24.8px;font-weight:700;text-anchor:middle}
.ssw{fill:#0f172a;font-size:23.4px;font-weight:600;text-anchor:middle}
.needle{fill:none;stroke:#000;stroke-width:3.4;stroke-linecap:round}

.hours{display:flex;gap:48.2px}
.hour{width:257.6px;display:flex;flex-direction:column;align-items:center;line-height:42px}
.hour time{color:#d1d5db;font-weight:500}
.hour .wicon{margin:32.5px 0 60px 4px}
.hour span{font-size:27.5px}
.value{margin-top:27.5px;font-size:41.4px;line-height:50px;height:50px;white-space:nowrap}
.value small{font-size:24.1px}
.desc{margin-top:57px;font-size:23.9px;line-height:34.3px}
.uv{margin-top:9px}
.uvdesc{margin-top:35px}

.gauge{width:100%;height:225px}
.gticks{fill:none;stroke:#374151;stroke-width:14.5;stroke-dasharray:2 3.4}
.gmajor{stroke:#374151;stroke-width:3.2}
.glabels{fill:#9ca3af;font-size:23.8px;text-anchor:middle}
.gneedle{filter:drop-shadow(1px 3px 2px rgba(0,0,0,.4))}
.gneedle path{fill:#374151}
.gneedle circle{fill:#ef4444}
.hpa{font-size:20.8px;font-weight:500;text-anchor:middle}

.bottom{grid-column:span 4;display:flex;gap:20px;min-width:0}
.mapcard{flex:1}
.map{position:relative;height:602.5px;border-radius:14px;overflow:hidden;background:#ddd}
.geo,.labels{position:absolute;inset:0;width:100%;height:100%}
.geo path,.geo ellipse{vector-effect:non-scaling-stroke}
.street{fill:none;stroke:#fff;stroke-width:2}
.dash{fill:none;stroke:#5ba4f2;stroke-width:1.3}
.scrub{fill:#c8d7ab}
.brown{fill:#c7c7b4}
.water{fill:#aed1dd}
.park{fill:#c9facd}
.wood{fill:#aed1a0}
.pitch{fill:#8fe0c0}
.ws{fill:none;stroke:#aed1dd}
.rd{fill:none;stroke:#fff;stroke-linejoin:round}
.minor{stroke-width:2.8}
.trunk{stroke-width:5}
.siding{fill:none;stroke:#a9a5aa;stroke-width:2.5}
.rail{fill:none;stroke:#777;stroke-width:5.5}
.raild{fill:none;stroke:#ddd;stroke-width:1.6;stroke-dasharray:9 9}
.yc,.yf,.oc,.of,.rc,.rf{fill:none;stroke-linejoin:round}
.yc{stroke:#c9c98f;stroke-width:7}
.yf{stroke:#f7fabf;stroke-width:5.5}
.oc{stroke:#b48a4a;stroke-width:9.5}
.of{stroke:#fbd6a4;stroke-width:7.5}
.rc{stroke:#c0665a;stroke-width:14}
.rf{stroke:#f5b09e;stroke-width:12}
.foot{fill:none;stroke:#4a43ee;stroke-width:1.6;stroke-dasharray:3 3.6}
.ferry{fill:none;stroke:#6f7bea;stroke-width:1.5;stroke-dasharray:11 8}
.bound{fill:none;stroke:#9c8bb0;stroke-width:1.6;stroke-dasharray:10 4 3 4}
.trees{fill:none;stroke:#9fb07f;stroke-width:1.2}
.labels{font-family:"Noto Sans",sans-serif}
.labels text{paint-order:stroke;stroke:rgba(255,255,255,.65);stroke-width:3px;stroke-linejoin:round}
.town{fill:#3b3b3b;font-size:19px}
.ind{fill:#6d4673;font-size:17px;font-style:italic;text-anchor:middle}
.ind .end{text-anchor:end}
.a13{fill:#a8201a;font-size:16.5px;font-style:italic;font-weight:500}
.wat{fill:#5b8fc0;font-size:16.5px;font-style:italic}
.road{fill:#333;font-size:14px}
.hs{fill:#777;font-size:17px}
.badge rect{fill:#f6e5d1;stroke:#d6b48c;stroke-width:1.5}
.labels .badge text{fill:#6b5326;font-size:17.5px;text-anchor:middle;stroke:none}
.zoom{position:absolute;left:18px;top:17.5px;border:2.5px solid rgba(0,0,0,.25);border-radius:6px;background-clip:padding-box}
.zoom button{display:block;width:52px;height:51px;border:0;background:#fff;font:700 37px/49px "Liberation Sans",sans-serif;color:#000}
.zoom button:first-child{border-bottom:1.5px solid #ccc;border-radius:4px 4px 0 0}
.zoom button:last-child{border-radius:0 0 4px 4px}
.attr{position:absolute;right:0;bottom:0;height:27.5px;padding:2px 8.5px 0 9px;display:flex;align-items:center;gap:6px;background:rgba(255,255,255,.8);font:21px "Liberation Sans",sans-serif;color:#333;white-space:nowrap}
.attr a{color:#0078a8}

.cities{width:349.5px;display:flex;flex-direction:column;gap:27.6px}
.cities h2{height:42px;line-height:42px;font-weight:500;margin:-2px 0 -8px}
.city{height:98.2px;border:2px solid #e4e4e7;border-radius:13px;box-shadow:0 2px 4px rgba(0,0,0,.05);display:flex;align-items:center;padding-left:40px}
.footer{margin-top:65px;line-height:42px;text-align:center;font-size:24px}
.footer b{color:#86efac;font-weight:700}
```
